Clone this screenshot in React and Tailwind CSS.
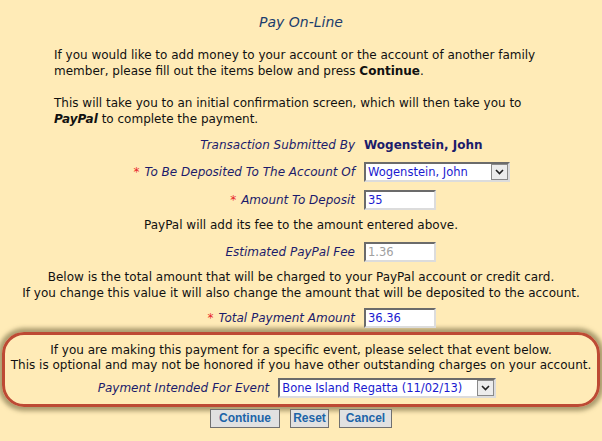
import React from 'react'

const font = { fontFamily: '"DejaVu Sans", Verdana, sans-serif' }

function Label({ children, required }) {
  return (
    <span className="italic text-[#1c1c6b]">
      {required && <span className="text-[#e8262b] not-italic mr-[5px]">*</span>}
      {children}
    </span>
  )
}

function TextBox({ value, disabled }) {
  return (
    <div
      className={
        'w-[72px] h-[20px] bg-white border-2 border-t-[#6b6b6b] border-l-[#6b6b6b] border-r-[#dcdcdc] border-b-[#dcdcdc] pl-[2px] leading-[16px] text-[11.5px] ' +
        (disabled ? 'text-[#a0a0a0]' : 'text-[#1a1ad0]')
      }
    >
      {value}
    </div>
  )
}

function SelectBox({ value, width }) {
  return (
    <div
      className={'h-[20px] bg-white border-2 border-t-[#6b6b6b] border-l-[#6b6b6b] border-r-[#dcdcdc] border-b-[#dcdcdc] flex items-center justify-between text-[11.5px] text-[#1a1ad0] ' + width}
    >
      <span className="pl-[2px] leading-[16px] whitespace-nowrap">{value}</span>
      <span className="w-[17px] h-[16px] bg-[#ececec] border border-[#8a8a8a] flex items-center justify-center">
        <svg width="9" height="6" viewBox="0 0 9 6">
          <path d="M1 1 L4.5 4.5 L8 1" stroke="#222" strokeWidth="1.6" fill="none" />
        </svg>
      </span>
    </div>
  )
}

function Row({ label, children, className = '' }) {
  return (
    <div className={'grid grid-cols-[355px_1fr] gap-x-[9px] items-center h-[20px] ' + className}>
      <div className="text-right whitespace-nowrap">{label}</div>
      <div>{children}</div>
    </div>
  )
}

function Button({ children, width }) {
  return (
    <button
      className={'h-[19px] bg-[#e1e1e1] border border-[#707070] text-[#1c64a8] font-bold text-[12px] leading-[15px] ' + width}
      style={{ fontFamily: '"Liberation Sans", Arial, sans-serif' }}
    >
      {children}
    </button>
  )
}

export default function App() {
  return (
    <div className="w-[602px] h-[441px] bg-[#ffebb7] text-[12px] text-[#111] overflow-hidden" style={font}>
      <div className="pt-[13px] text-center italic text-[14px] leading-[18px] text-[#1b3d6d]">Pay On-Line</div>

      <p className="mt-[16px] ml-[54px] mr-[50px] leading-[16px]">
        If you would like to add money to your account or the account of another family member, please fill out
        the items below and press <b>Continue</b>.
      </p>
      <p className="mt-[16px] ml-[54px] mr-[50px] leading-[16px]">
        This will take you to an initial confirmation screen, which will then take you to <b><i>PayPal</i></b> to
        complete the payment.
      </p>

      <Row className="mt-[8px]" label={<Label>Transaction Submitted By</Label>}>
        <span className="font-bold text-[#1c1c6b] text-[12px]">Wogenstein, John</span>
      </Row>
      <Row className="mt-[7px]" label={<Label required>To Be Deposited To The Account Of</Label>}>
        <SelectBox value="Wogenstein, John" width="w-[146px]" />
      </Row>
      <Row className="mt-[8px]" label={<Label required>Amount To Deposit</Label>}>
        <TextBox value="35" />
      </Row>
      <p className="mt-[7px] text-center leading-[16px]">PayPal will add its fee to the amount entered above.</p>
      <Row className="mt-[9px]" label={<Label>Estimated PayPal Fee</Label>}>
        <TextBox value="1.36" disabled />
      </Row>
      <p className="mt-[7px] text-center leading-[16px]">
        Below is the total amount that will be charged to your PayPal account or credit card.
        <br />
        If you change this value it will also change the amount that will be deposited to the account.
      </p>
      <Row className="mt-[7px]" label={<Label required>Total Payment Amount</Label>}>
        <TextBox value="36.36" />
      </Row>

      <div className="mx-[2px] mt-[4px] h-[75px] rounded-[22px] border-[3px] border-[#bd4a34] shadow-[0_0_4px_4px_rgba(135,122,80,0.7)] pt-[8px]">
        <p className="text-center leading-[15px] whitespace-nowrap">
          If you are making this payment for a specific event, please select that event below.
          <br />
          This is optional and may not be honored if you have other outstanding charges on your account.
        </p>
        <div className="mt-[5px] flex justify-center items-center gap-[9px] pr-[8px]">
          <Label>Payment Intended For Event</Label>
          <SelectBox value="Bone Island Regatta (11/02/13)" width="w-[218px]" />
        </div>
      </div>

      <div className="mt-[2px] flex justify-center gap-[10px]">
        <Button width="w-[70px]">Continue</Button>
        <Button width="w-[39px]">Reset</Button>
        <Button width="w-[53px]">Cancel</Button>
      </div>
    </div>
  )
}
